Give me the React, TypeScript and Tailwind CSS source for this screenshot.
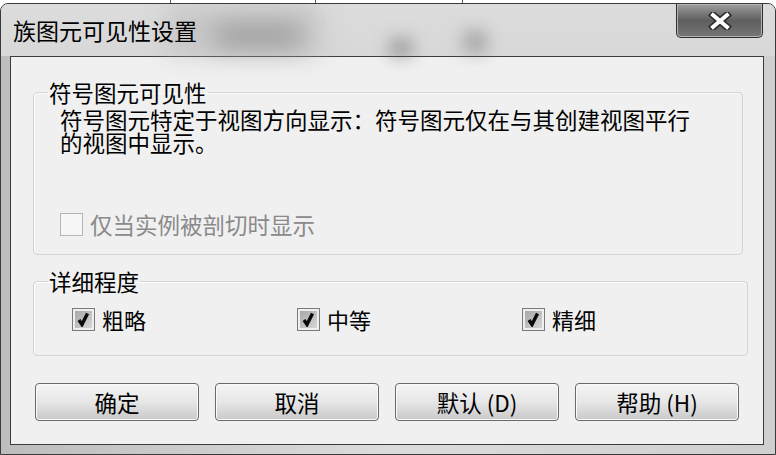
import React from "react";

function CheckBox({ checked, disabled }: { checked?: boolean; disabled?: boolean }) {
  if (disabled) {
    return (
      <div className="w-[23px] h-[23px] border border-[#b5b5b5] bg-[#f6f6f6] shrink-0" />
    );
  }
  return (
    <div className="w-[23px] h-[23px] border border-[#7a7a7a] bg-[#efefef] p-[2px] shrink-0">
      <div className="w-full h-full bg-gradient-to-br from-[#a8a8a8] to-[#d6d6d6] flex items-center justify-center">
        {checked && (
          <svg width="15" height="15" viewBox="0 0 15 15">
            <path d="M3 8 L6 12.5 L11.5 1.5" fill="none" stroke="#0a0a0a" strokeWidth="3.4" strokeLinejoin="miter" />
          </svg>
        )}
      </div>
    </div>
  );
}

function Btn({ children }: { children: React.ReactNode }) {
  return (
    <div className="w-[164px] h-[38px] rounded-[4px] border border-[#6a6a6a] bg-gradient-to-b from-[#f5f5f5] via-[#e6e6e6] to-[#c9c9c9] shadow-[inset_0_0_0_1px_#fafafa] flex items-center justify-center text-[22.5px] leading-[24px] text-black">
      {children}
    </div>
  );
}

export default function App() {
  return (
    <div className="w-[776px] h-[455px] bg-white overflow-hidden font-['Noto_Sans_CJK_SC','Noto_Sans',sans-serif] text-black">
      <div className="h-[3px] flex">
        <div className="w-[170px]" />
        <div className="w-px bg-[#555]" />
        <div className="w-[144px]" />
        <div className="w-px bg-[#555]" />
        <div className="w-[146px]" />
        <div className="w-px bg-[#555]" />
      </div>
      <div className="h-[452px] w-[776px] border border-[#3a3a3a] rounded-t-[8px] bg-gradient-to-r from-[#bdbdbd] via-[#dcdcdc] to-[#cfcfcf] flex flex-col overflow-hidden">
        <div className="h-[52px] flex items-start relative bg-gradient-to-b from-[#dcdcdc] to-[#d8d8d8]">
          <div className="absolute left-[165px] top-0 w-[155px] h-[52px] bg-[#b5b5b5]/50 blur-md" />
          <div className="absolute left-[215px] top-[20px] w-[85px] h-[24px] bg-[#777]/50 blur-md" />
          <div className="absolute left-[388px] top-[34px] w-[24px] h-[20px] bg-[#555]/40 blur-sm" />
          <div className="absolute left-[462px] top-[26px] w-[24px] h-[24px] bg-[#666]/40 blur-sm" />
          <div className="relative mt-[14px] ml-[12px] text-[23px] leading-[24px]">族图元可见性设置</div>
          <div className="relative ml-auto mr-[12px] w-[87px] h-[34px] rounded-b-[5px] border border-t-0 border-[#2e2e2e] bg-gradient-to-b from-[#a0a0a0] via-[#5e5e5e] to-[#767676] shadow-[inset_0_0_0_1px_#b5b5b5] flex items-center justify-center">
            <svg width="26" height="18" viewBox="0 0 26 18">
              <path d="M6 3 L20 15 M20 3 L6 15" stroke="#2a2a2a" strokeWidth="7" strokeLinecap="square" />
              <path d="M6 3 L20 15 M20 3 L6 15" stroke="#ffffff" strokeWidth="4" strokeLinecap="square" />
            </svg>
          </div>
        </div>
        <div className="ml-[9px] mr-[11px] h-[389px] border border-[#3c3c3c] bg-[#f0f0f0] pl-[22px] pr-[20px] flex flex-col">
          <fieldset className="mt-[23px] border border-[#d3d3d3] rounded-[4px] shadow-[inset_1px_1px_0_#fcfcfc]">
            <legend className="ml-[14px] px-[1px] text-[22.5px] leading-[24px]">符号图元可见性</legend>
            <div className="pl-[26px] pb-[18px]">
              <div className="mt-[4px] text-[22.5px] leading-[23px]">
                符号图元特定于视图方向显示：符号图元仅在与其创建视图平行
                <br />
                的视图中显示。
              </div>
              <div className="mt-[58px] h-[24px] flex items-center gap-[7px]">
                <CheckBox disabled />
                <span className="text-[22.5px] leading-[24px] text-[#8a8a8a]">仅当实例被剖切时显示</span>
              </div>
            </div>
          </fieldset>
          <fieldset className="mt-[14px] border border-[#d3d3d3] rounded-[4px] shadow-[inset_1px_1px_0_#fcfcfc]">
            <legend className="ml-[14px] px-[1px] text-[22.5px] leading-[24px]">详细程度</legend>
            <div className="pl-[38px] pb-[24px] mt-[14px] grid grid-cols-[225px_225px_225px]">
              <div className="h-[24px] flex items-center gap-[7px]">
                <CheckBox checked />
                <span className="text-[22px] leading-[24px]">粗略</span>
              </div>
              <div className="h-[24px] flex items-center gap-[7px]">
                <CheckBox checked />
                <span className="text-[22px] leading-[24px]">中等</span>
              </div>
              <div className="h-[24px] flex items-center gap-[7px]">
                <CheckBox checked />
                <span className="text-[22px] leading-[24px]">精细</span>
              </div>
            </div>
          </fieldset>
          <div className="mt-[27px] ml-[2px] flex gap-[16px]">
            <Btn>确定</Btn>
            <Btn>取消</Btn>
            <Btn>默认 (D)</Btn>
            <Btn>帮助 (H)</Btn>
          </div>
        </div>
      </div>
    </div>
  );
}
